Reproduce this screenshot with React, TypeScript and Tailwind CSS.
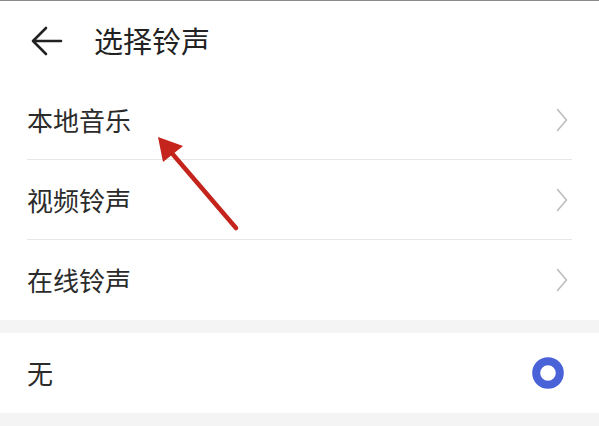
import React from "react";

const Chevron = () => (
  <svg width="12" height="24" viewBox="0 0 12 24" fill="none">
    <path d="M1.5 1.5 L10.5 12 L1.5 22.5" stroke="#bdbdbd" strokeWidth="1.6" strokeLinecap="round" strokeLinejoin="round" />
  </svg>
);

const Row = ({ label, divider }: { label: string; divider: boolean }) => (
  <div className={`mx-[27px] flex h-[80px] items-center justify-between ${divider ? "border-b border-[#e6e6e6]" : ""}`}>
    <span className="text-[26px] leading-none text-[#2b2b2b]">{label}</span>
    <span className="mr-[4px] flex items-center">
      <Chevron />
    </span>
  </div>
);

export default function App() {
  return (
    <div
      className="relative h-[426px] w-[599px] overflow-hidden border-t border-[#8a8a8a] bg-white"
      style={{ fontFamily: '"Noto Sans CJK SC", "Noto Sans", sans-serif' }}
    >
      <div className="flex h-[79px] items-center pl-[31px]">
        <svg width="32" height="30" viewBox="0 0 32 30" fill="none">
          <path d="M30 15 H2 M15 2 L2 15 L15 28" stroke="#222" strokeWidth="2.6" strokeLinecap="round" strokeLinejoin="round" />
        </svg>
        <span className="ml-[31px] text-[29px] leading-none text-[#222]">选择铃声</span>
      </div>
      <Row label="本地音乐" divider />
      <Row label="视频铃声" divider />
      <Row label="在线铃声" divider={false} />
      <div className="h-[13px] bg-[#f4f4f4]" />
      <div className="mx-[27px] flex h-[80px] items-center justify-between">
        <span className="text-[26px] leading-none text-[#2b2b2b]">无</span>
        <svg className="mr-[8px]" width="32" height="32" viewBox="0 0 32 32">
          <circle cx="16" cy="16" r="11.8" fill="none" stroke="#4a62d8" strokeWidth="8" />
        </svg>
      </div>
      <div className="h-[20px] bg-[#f4f4f4]" />
      <svg className="pointer-events-none absolute left-0 top-0" width="599" height="426" viewBox="0 0 599 426">
        <line x1="236" y1="227" x2="164" y2="143" stroke="#c4241c" strokeWidth="4.5" strokeLinecap="round" />
        <polygon points="158,136 183,145 163,161" fill="#c4241c" />
      </svg>
    </div>
  );
}
